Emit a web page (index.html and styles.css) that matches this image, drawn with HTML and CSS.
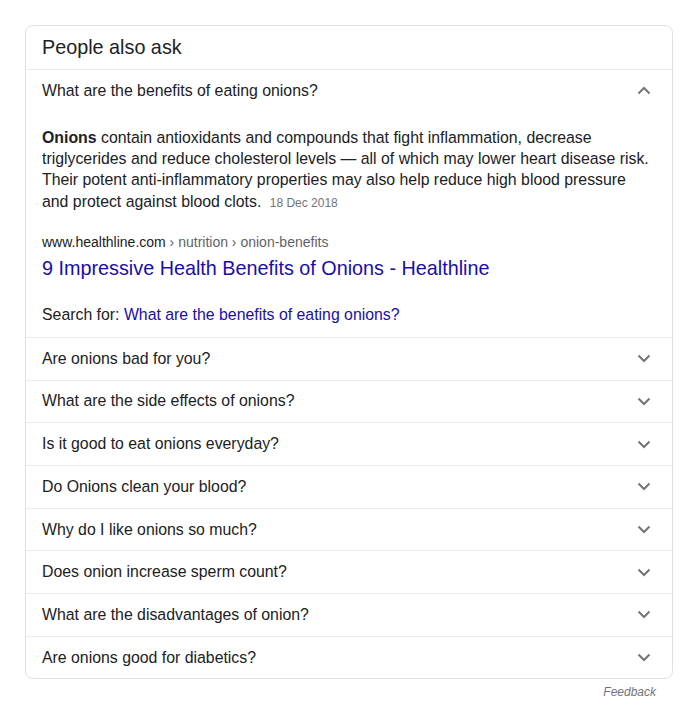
FILE: index.html
```html
<!DOCTYPE html>
<html>
<head>
<meta charset="utf-8">
<link rel="stylesheet" href="styles.css">
</head>
<body>
<div class="wrap">
  <div class="card">
    <div class="card-head">People also ask</div>
    <div class="q open">
      <span>What are the benefits of eating onions?</span>
      <svg class="chev" width="14" height="9" viewBox="0 0 14 9"><path d="M1.5 7.5 L7 2 L12.5 7.5" fill="none" stroke="#70757a" stroke-width="2"/></svg>
    </div>
    <div class="answer">
      <p class="para"><b>Onions</b> contain antioxidants and compounds that fight inflammation, decrease triglycerides and reduce cholesterol levels — all of which may lower heart disease risk. Their potent anti-inflammatory properties may also help reduce high blood pressure and protect against blood clots. <span class="date">18 Dec 2018</span></p>
      <div class="cite">www.healthline.com<span class="crumb"> › nutrition › onion-benefits</span></div>
      <a class="title" href="#">9 Impressive Health Benefits of Onions - Healthline</a>
      <div class="search">Search for: <a href="#">What are the benefits of eating onions?</a></div>
    </div>
    <div class="q"><span>Are onions bad for you?</span><svg class="chev" width="14" height="9" viewBox="0 0 14 9"><path d="M1.5 1.5 L7 7 L12.5 1.5" fill="none" stroke="#70757a" stroke-width="2"/></svg></div>
    <div class="q"><span>What are the side effects of onions?</span><svg class="chev" width="14" height="9" viewBox="0 0 14 9"><path d="M1.5 1.5 L7 7 L12.5 1.5" fill="none" stroke="#70757a" stroke-width="2"/></svg></div>
    <div class="q"><span>Is it good to eat onions everyday?</span><svg class="chev" width="14" height="9" viewBox="0 0 14 9"><path d="M1.5 1.5 L7 7 L12.5 1.5" fill="none" stroke="#70757a" stroke-width="2"/></svg></div>
    <div class="q"><span>Do Onions clean your blood?</span><svg class="chev" width="14" height="9" viewBox="0 0 14 9"><path d="M1.5 1.5 L7 7 L12.5 1.5" fill="none" stroke="#70757a" stroke-width="2"/></svg></div>
    <div class="q"><span>Why do I like onions so much?</span><svg class="chev" width="14" height="9" viewBox="0 0 14 9"><path d="M1.5 1.5 L7 7 L12.5 1.5" fill="none" stroke="#70757a" stroke-width="2"/></svg></div>
    <div class="q"><span>Does onion increase sperm count?</span><svg class="chev" width="14" height="9" viewBox="0 0 14 9"><path d="M1.5 1.5 L7 7 L12.5 1.5" fill="none" stroke="#70757a" stroke-width="2"/></svg></div>
    <div class="q"><span>What are the disadvantages of onion?</span><svg class="chev" width="14" height="9" viewBox="0 0 14 9"><path d="M1.5 1.5 L7 7 L12.5 1.5" fill="none" stroke="#70757a" stroke-width="2"/></svg></div>
    <div class="q last"><span>Are onions good for diabetics?</span><svg class="chev" width="14" height="9" viewBox="0 0 14 9"><path d="M1.5 1.5 L7 7 L12.5 1.5" fill="none" stroke="#70757a" stroke-width="2"/></svg></div>
  </div>
  <div class="feedback">Feedback</div>
</div>
</body>
</html>
```

FILE: styles.css
```css
html, body {
  margin: 0;
  padding: 0;
  background: #fff;
}
body {
  font-family: "Liberation Sans", Arial, sans-serif;
  color: #202124;
}
.wrap {
  padding: 25px 27px 0 25px;
}
.card {
  border: 1px solid #dfe1e5;
  border-radius: 8px;
  overflow: hidden;
}
.card-head {
  font-size: 19.8px;
  line-height: 26px;
  padding: 8px 16px 9px 16px;
  border-bottom: 1px solid #ebebeb;
  color: #202124;
}
.q {
  display: flex;
  align-items: center;
  justify-content: space-between;
  height: 41.7px;
  padding: 0 21px 0 16px;
  font-size: 15.85px;
  border-bottom: 1px solid #ebebeb;
}
.q.open {
  border-bottom: none;
  height: 41.6px;
}
.q.last {
  border-bottom: none;
}
.chev {
  display: block;
}
.answer {
  padding: 15px 16px 11px 16px;
  border-bottom: 1px solid #ebebeb;
}
.para {
  margin: 0;
  font-size: 15.85px;
  line-height: 21.33px;
}
.para b {
  font-weight: bold;
}
.date {
  font-size: 12px;
  color: #70757a;
  margin-left: 4px;
}
.cite {
  margin-top: 18px;
  font-size: 14px;
  line-height: 20px;
  color: #202124;
}
.crumb {
  color: #5f6368;
}
.title {
  display: block;
  margin-top: 3px;
  font-size: 19.8px;
  line-height: 26px;
  color: #1a0dab;
  text-decoration: none;
}
.search {
  margin-top: 23px;
  font-size: 15.85px;
  line-height: 22px;
}
.search a {
  color: #1a0dab;
  text-decoration: none;
}
.feedback {
  text-align: right;
  font-size: 12px;
  font-style: italic;
  color: #70757a;
  padding: 5px 17px 0 0;
  line-height: 16px;
}
```
